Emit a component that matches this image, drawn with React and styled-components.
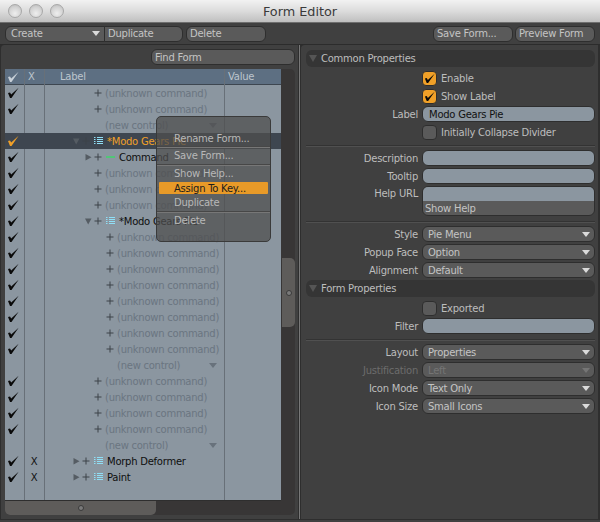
import React from "react";
import styled, { createGlobalStyle } from "styled-components";

const Global = createGlobalStyle`
  html, body { margin: 0; padding: 0; background: #3e3e3e; }
  body { width: 600px; height: 522px; overflow: hidden; font-family: "DejaVu Sans", "Liberation Sans", sans-serif; font-size: 10px; letter-spacing: -0.25px; }
`;
const Window = styled.div`width:600px;height:522px;display:flex;flex-direction:column;background:#404040;overflow:hidden;`;
const TitleBar = styled.div`height:23px;box-sizing:border-box;flex:none;display:flex;align-items:center;position:relative;justify-content:center;
  background:linear-gradient(#f2f2f2,#dcdcdc 50%,#bfbfbf);border-bottom:1px solid #6e6e6e;font-size:12.8px;letter-spacing:0;color:#3a3a3a;`;
const Lights = styled.div`position:absolute;left:8px;top:4px;display:flex;gap:7px;`;
const Light = styled.span`width:14px;height:14px;border-radius:50%;box-sizing:border-box;border:1px solid #a8a8a8;background:radial-gradient(circle at 50% 70%,#eeeeee,#d2d2d2 60%,#b5b5b5);`;
const Toolbar = styled.div`height:22px;flex:none;display:flex;align-items:center;padding:0 4px 0 5px;background:#404040;border-bottom:1px solid #2c2c2c;box-sizing:border-box;`;
const Btn = styled.div`box-sizing:border-box;width:${p=>p.$w}px;height:16px;margin-left:${p=>p.$ml||0}px;display:flex;align-items:center;padding-left:${p=>p.$pl||5}px;
  border:1px solid #2e2e2e;background:#5a5a5a;color:#c4c4c4;border-radius:${p=>p.$r||"6px"};`;
const Caret = styled.i`width:0;height:0;border-left:4px solid transparent;border-right:4px solid transparent;border-top:5px solid ${p=>p.$c||"#dadada"};margin-left:auto;margin-right:${p=>p.$mr||4}px;flex:none;`;
const Panels = styled.div`flex:1;display:flex;min-height:0;background:#2e2e2e;margin-bottom:2px;padding-bottom:1px;`;
const LeftPanel = styled.div`width:298px;flex:none;background:#404040;border-left:1px solid #2e2e2e;border-radius:4px 0 0 0;box-sizing:border-box;padding:4px 3px 0 4px;display:flex;flex-direction:column;`;
const Splitter = styled.div`width:3px;flex:none;background:linear-gradient(90deg,#2e2e2e 33%,#787878 33% 66%,#2e2e2e 66%);`;
const Find = styled.div`box-sizing:border-box;width:144px;height:16px;margin-left:auto;border:1px solid #2e2e2e;border-radius:6px;background:#5a5a5a;color:#c4c4c4;display:flex;align-items:center;padding-left:3px;flex:none;`;
const TableArea = styled.div`margin-top:4px;height:446px;display:flex;flex:none;position:relative;background:#383636;border-radius:0 5px 5px 5px;`;
const Table = styled.div`width:276px;height:431px;box-sizing:content-box;flex:none;background:#8b96a0;display:flex;flex-direction:column;position:relative;border-bottom:1px solid #2e2e2e;`;
const V = styled.div`position:absolute;top:0;bottom:0;width:1px;background:#687078;left:${p=>p.$x}px;`;
const Header = styled.div`height:16px;box-sizing:border-box;flex:none;display:grid;grid-template-columns:20px 20px 180px 56px;background:#5d6f82;color:#bcc5cd;border-bottom:1px solid #3d4650;align-items:center;`;
const HCheck = styled.span`padding-left:2px;display:flex;`;
const HText = styled.span`padding-left:${p=>p.$pl||0}px;`;
const Row = styled.div`height:16px;flex:none;display:grid;grid-template-columns:20px 20px 180px 56px;align-items:center;background:${p=>p.$sel?"#3e4650":"transparent"};position:relative;`;
const CheckCell = styled.span`padding-left:2px;display:flex;`;
const XCell = styled.span`text-align:center;color:#111;padding-right:2px;`;
const Tree = styled.div`display:flex;align-items:center;padding:0 4px 0 ${p=>p.$i}px;white-space:nowrap;height:16px;color:${p=>p.$sel?"#f0a028":p.$dim?"#6a7580":"#0e0e0e"};`;
const Arrow = styled.i`width:10px;flex:none;display:flex;`;
const Plus = styled.svg`width:8px;height:8px;flex:none;margin-right:${p=>p.$mr}px;`;
const Gutter = styled.div`flex:1;position:relative;`;
const VThumb = styled.div`position:absolute;left:1px;top:189px;width:13px;height:69px;background:#5e5c5a;border-radius:0 5px 5px 0;display:flex;align-items:center;justify-content:center;`;
const HBar = styled.div`position:absolute;left:0;top:432px;width:276px;height:14px;background:#383636;border-radius:0 0 5px 5px;`;
const HThumb = styled.div`width:151px;height:14px;background:#5e5c5a;border-radius:0 0 5px 5px;display:flex;align-items:center;justify-content:center;`;
const Dot = styled.span`width:6px;height:6px;border-radius:50%;border:1px solid #3a3a3a;background:#7a7a7a;box-sizing:border-box;`;
const Menu = styled.div`position:absolute;left:151px;top:47px;width:115px;height:126px;box-sizing:border-box;background:rgba(78,78,78,.74);border:1px solid #3a3a3a;border-radius:5px;color:#b8b8b8;padding-top:14px;display:flex;flex-direction:column;`;
const MItem = styled.div`height:${p=>p.$h}px;box-sizing:border-box;display:flex;align-items:center;padding-left:17px;flex:none;
  ${p=>p.$on?"background:#e89a28;color:#1c1c1c;margin:0 2px;padding-left:15px;border-radius:1px;":""}
  ${p=>p.$line?"border-bottom:1px solid #474747;box-shadow:0 1px 0 #777;":""}`;
const RightPanel = styled.div`flex:1;background:#404040;border-radius:4px 0 0 0;box-sizing:border-box;padding:5px 3px 0 5px;margin-right:2px;`;
const Section = styled.div`height:17px;background:#353535;border-radius:6px;display:flex;align-items:center;color:#bdbdbd;gap:4px;padding-left:3px;margin-top:${p=>p.$mt||0}px;`;
const SecArrow = styled.i`width:0;height:0;border-left:4px solid transparent;border-right:4px solid transparent;border-top:7px solid #555;`;
const Group = styled.div`display:flex;flex-direction:column;padding-top:2px;`;
const PRow = styled.div`display:grid;grid-template-columns:112px 1fr;column-gap:4px;align-items:center;height:${p=>p.$h||18}px;color:#bdbdbd;`;
const PLabel = styled.span`text-align:right;color:${p=>p.$dis?"#6c6c6c":"#bdbdbd"};white-space:nowrap;`;
const TopLabel = styled(PLabel)`align-self:start;padding-top:3px;`;
const Input = styled.div`box-sizing:border-box;height:16px;background:#8b96a0;border:1px solid #2e2e2e;border-radius:6px;color:#111;padding-left:6px;display:flex;align-items:center;`;
const HelpBox = styled.div`box-sizing:border-box;height:30px;border:1px solid #2e2e2e;border-radius:6px;overflow:hidden;background:#5a5a5a;color:#c4c4c4;display:flex;flex-direction:column;`;
const HelpIn = styled.div`height:14px;background:#8b96a0;flex:none;`;
const HelpBtn = styled.div`padding-left:2px;height:14px;display:flex;align-items:center;`;
const Select = styled.div`box-sizing:border-box;height:16px;background:#5a5a5a;border:1px solid #2e2e2e;border-radius:6px;color:${p=>p.$dis?"#757575":"#c4c4c4"};padding-left:5px;display:flex;align-items:center;`;
const CheckLine = styled.div`display:flex;align-items:center;gap:4px;`;
const Box = styled.div`box-sizing:border-box;width:15px;height:15px;border:1px solid #2e2e2e;border-radius:4px;background:${p=>p.$on?"#f0a028":"#5a5a5a"};display:flex;align-items:center;justify-content:center;`;
const Sep = styled.div`height:1px;background:#333;border-bottom:1px solid #505050;margin:4px 0 2px;`;

const Tick = ({c="#0a0a0a",s=12})=>(
  <svg width={s} height={s} viewBox="0 0 12 12"><path d="M1 6 L3 5.5 L4.2 7.5 L11.6 0.8 L4.5 11 L3 11 Z" fill={c}/></svg>
);
const PlusIcon = ({mr})=>(
  <Plus viewBox="0 0 8 8" $mr={mr}><path d="M4 0.5V7.5M0.5 4H7.5" stroke="#3d4248" strokeWidth="1"/></Plus>
);
const Tri = ({open})=>(
  <Arrow>
    <svg width="8" height="8" viewBox="0 0 8 8">
      {open?<path d="M1 1.5H7.5L4.2 7.5Z" fill="#555c63"/>:<path d="M1.5 1V7.5L7.5 4.2Z" fill="#555c63"/>}
    </svg>
  </Arrow>
);
const ListIcon = ()=>(
  <svg width="9" height="8" viewBox="0 0 9 8" style={{flex:"none",marginRight:4}}>
    <path d="M0 .5H1.5M3 .5H9M0 2.5H1.5M3 2.5H9M0 4.5H1.5M3 4.5H9M0 6.5H1.5M3 6.5H9" stroke="#8fdff6" strokeWidth="1"/>
  </svg>
);
const GreenIcon = ()=>(
  <svg width="9" height="8" viewBox="0 0 9 8" style={{flex:"none",marginRight:4}}><path d="M0 4H9" stroke="#3fd46a" strokeWidth="1.5"/></svg>
);

const rows = [
  {t:"u",i:49},{t:"u",i:49},{t:"n",i:60,caret:1},
  {t:"f",i:27,sel:1,open:1,label:"*Modo Gears Pie"},
  {t:"c",i:39,label:"Command"},
  {t:"u",i:49},{t:"u",i:49},{t:"u",i:49},
  {t:"f",i:39,open:1,label:"*Modo Gears Pie"},
  {t:"u",i:61},{t:"u",i:61},{t:"u",i:61},{t:"u",i:61},{t:"u",i:61},{t:"u",i:61},{t:"u",i:61},{t:"u",i:61},
  {t:"n",i:72,caret:1},
  {t:"u",i:49},{t:"u",i:49},{t:"u",i:49},{t:"u",i:49},
  {t:"n",i:60,caret:1},
  {t:"f",i:27,label:"Morph Deformer",x:1},
  {t:"f",i:27,label:"Paint",x:1},
];

function TreeRow({r}){
  const check = r.t!=="n";
  return (
    <Row $sel={r.sel}>
      <CheckCell>{check && <Tick c={r.sel?"#f0a028":"#0a0a0a"} />}</CheckCell>
      <XCell>{r.x?"X":""}</XCell>
      {r.t==="u" && <Tree $i={r.i} $dim><PlusIcon mr={3}/>(unknown command)</Tree>}
      {r.t==="n" && <Tree $i={r.i} $dim>(new control)<Caret $c="#68727c" $mr={0}/></Tree>}
      {r.t==="c" && <Tree $i={r.i}><Tri/><PlusIcon mr={4}/><GreenIcon/>{r.label}</Tree>}
      {r.t==="f" && <Tree $i={r.i} $sel={r.sel}><Tri open={r.open}/><PlusIcon mr={4}/><ListIcon/>{r.label}</Tree>}
      <span/>
    </Row>
  );
}

const Check = ({on,children})=>(
  <PRow><span/><CheckLine><Box $on={on}>{on && <Tick s={11}/>}</Box>{children}</CheckLine></PRow>
);
const Sel = ({label,value,dis})=>(
  <PRow><PLabel $dis={dis}>{label}</PLabel><Select $dis={dis}>{value}<Caret $c={dis?"#757575":"#dadada"}/></Select></PRow>
);
const Inp = ({label,value})=>(
  <PRow><PLabel>{label}</PLabel><Input>{value}</Input></PRow>
);

export default function App(){
  return (
    <Window>
      <Global/>
      <TitleBar>
        <Lights><Light/><Light/><Light/></Lights>
        Form Editor
      </TitleBar>
      <Toolbar>
        <Btn $w={100} $r="6px 0 0 6px">Create<Caret/></Btn>
        <Btn $w={79} $ml={-1} $pl={3} $r="0 6px 6px 0">Duplicate</Btn>
        <Btn $w={80} $ml={3} $pl={3}>Delete</Btn>
        <Btn $w={80} $ml={167} $pl={3}>Save Form...</Btn>
        <Btn $w={80} $ml={2} $pl={3}>Preview Form</Btn>
      </Toolbar>
      <Panels>
        <LeftPanel>
          <Find>Find Form</Find>
          <TableArea>
            <Table>
              <V $x={19}/><V $x={39}/><V $x={219}/>
              <Header>
                <HCheck><Tick c="#c8d0d8"/></HCheck>
                <HText $pl={3}>X</HText>
                <HText $pl={15}>Label</HText>
                <HText $pl={3}>Value</HText>
              </Header>
              {rows.map((r,i)=><TreeRow key={i} r={r}/>)}
              <Menu>
                <MItem $h={16} $line>Rename Form...</MItem>
                <MItem $h={18} $line>Save Form...</MItem>
                <MItem $h={17}>Show Help...</MItem>
                <MItem $h={12} $on>Assign To Key...</MItem>
                <MItem $h={18} $line>Duplicate</MItem>
                <MItem $h={16}>Delete</MItem>
              </Menu>
            </Table>
            <Gutter><VThumb><Dot/></VThumb></Gutter>
            <HBar><HThumb><Dot/></HThumb></HBar>
          </TableArea>
        </LeftPanel>
        <Splitter/>
        <RightPanel>
          <Section><SecArrow/>Common Properties</Section>
          <Group>
            <Check on>Enable</Check>
            <Check on>Show Label</Check>
            <Inp label="Label" value="Modo Gears Pie"/>
            <Check>Initially Collapse Divider</Check>
          </Group>
          <Sep/>
          <Inp label="Description"/>
          <Inp label="Tooltip"/>
          <PRow $h={32}><TopLabel>Help URL</TopLabel><HelpBox><HelpIn/><HelpBtn>Show Help</HelpBtn></HelpBox></PRow>
          <Sep/>
          <Sel label="Style" value="Pie Menu"/>
          <Sel label="Popup Face" value="Option"/>
          <Sel label="Alignment" value="Default"/>
          <Section $mt={1}><SecArrow/>Form Properties</Section>
          <Group>
            <Check>Exported</Check>
            <Inp label="Filter"/>
          </Group>
          <Sep/>
          <Sel label="Layout" value="Properties"/>
          <Sel label="Justification" value="Left" dis/>
          <Sel label="Icon Mode" value="Text Only"/>
          <Sel label="Icon Size" value="Small Icons"/>
        </RightPanel>
      </Panels>
    </Window>
  );
}
